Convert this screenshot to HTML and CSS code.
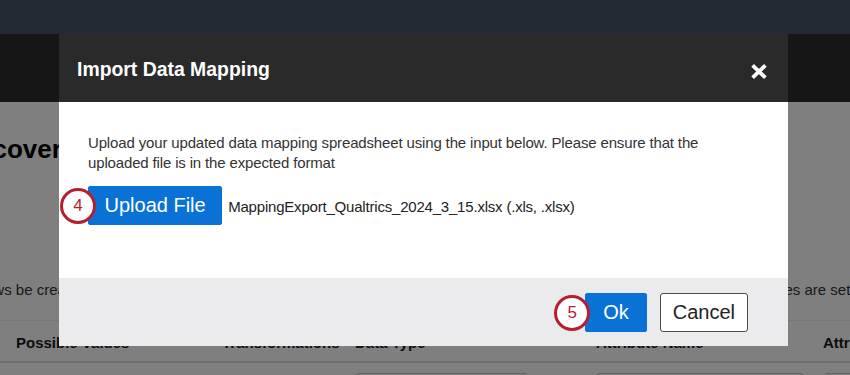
FILE: index.html
```html
<!DOCTYPE html>
<html lang="en">
<head>
<meta charset="utf-8">
<title>Import Data Mapping</title>
<link rel="stylesheet" href="styles.css">
</head>
<body>
<div class="page">
  <nav class="topnav"></nav>
  <header class="pagebar"></header>
  <main class="content">
    <h1 class="title">Discover Data Mapping</h1>
    <p class="note"><span class="note-left">rows be created for each new column found in the uploaded spreadsheet file</span><span class="note-right">values are set for each attribute</span></p>
    <div class="table">
      <div class="thead">
        <div>Possible Values</div>
        <div>Transformations</div>
        <div>Data Type</div>
        <div>Attribute Name</div>
        <div>Attribute Type</div>
      </div>
      <div class="trow">
        <div></div>
        <div></div>
        <div><span class="field f-type"></span></div>
        <div><span class="field f-name"></span></div>
        <div><span class="field f-attr"></span></div>
      </div>
    </div>
  </main>
</div>

<div class="overlay"></div>

<section class="modal" role="dialog" aria-label="Import Data Mapping">
  <header class="modal-head">
    <h2 class="modal-title">Import Data Mapping</h2>
    <button class="close" aria-label="Close">
      <svg width="16" height="15" viewBox="0 0 16 15" aria-hidden="true"><path d="M1.6 1.4 L14.4 13.6 M14.4 1.4 L1.6 13.6" stroke="#ffffff" stroke-width="3.8" stroke-linecap="butt" fill="none"/></svg>
    </button>
  </header>
  <div class="modal-body">
    <p class="intro">Upload your updated data mapping spreadsheet using the input below. Please ensure that the uploaded file is in the expected format</p>
    <div class="upload-row">
      <span class="btn-wrap"><span class="step step-4">4</span><button class="btn primary upload">Upload File</button></span>
      <span class="filename">MappingExport_Qualtrics_2024_3_15.xlsx (.xls, .xlsx)</span>
    </div>
  </div>
  <footer class="modal-foot">
    <span class="btn-wrap"><span class="step step-5">5</span><button class="btn primary ok">Ok</button></span>
    <button class="btn secondary">Cancel</button>
  </footer>
</section>
</body>
</html>
```
FILE: styles.css
```css
html, body {
  margin: 0;
  padding: 0;
}
body {
  width: 850px;
  height: 375px;
  overflow: hidden;
  background: #ffffff;
  font-family: "Liberation Sans", Arial, Helvetica, sans-serif;
  color: #333333;
}

/* ---------- page behind the dialog ---------- */
.page {
  display: flex;
  flex-direction: column;
}
.topnav {
  height: 34px;
  background: #465466;
}
.pagebar {
  height: 68px;
  background: #2c2c2c;
}
.content {
  display: flex;
  flex-direction: column;
  overflow: hidden;
}
.title {
  margin: 31px 0 0 -48px;
  font-size: 26px;
  line-height: 32px;
  font-weight: 700;
  color: #000000;
  white-space: nowrap;
}
.note {
  display: flex;
  margin: 115px 0 0;
  font-size: 15px;
  line-height: 20px;
  color: #333333;
  white-space: nowrap;
}
.note-left {
  flex: 0 0 777px;
  margin-left: -20px;
  overflow: hidden;
}
.table {
  margin-top: 20px;
}
.thead {
  display: grid;
  grid-template-columns: 206px 133px 241px 227px 1fr;
  padding: 12px 0 8px 16px;
  border-top: 1px solid #eeeeee;
  border-bottom: 2px solid #dddddd;
  font-size: 15px;
  line-height: 20px;
  font-weight: 700;
  color: #1a1a1a;
  white-space: nowrap;
}
.trow {
  display: grid;
  grid-template-columns: 206px 133px 241px 227px 1fr;
  padding: 10px 0 0 16px;
}
.field {
  display: block;
  height: 30px;
  border: 1px solid #c8c8c8;
  border-radius: 3px;
  background: #ffffff;
}
.f-type { width: 171px; }
.f-name { width: 206px; }
.f-attr { width: 60px; margin-left: 1px; }

/* ---------- overlay ---------- */
.overlay {
  position: fixed;
  inset: 0;
  background: rgba(0, 0, 0, 0.5);
}

/* ---------- dialog ---------- */
.modal {
  position: fixed;
  top: 34px;
  left: 59px;
  width: 729px;
  display: flex;
  flex-direction: column;
  background: #ffffff;
}
.modal-head {
  height: 68px;
  box-sizing: border-box;
  display: flex;
  align-items: center;
  justify-content: space-between;
  padding: 2px 21px 0 18px;
  background: #2a2a2a;
}
.modal-title {
  margin: 0;
  font-size: 19.4px;
  font-weight: 700;
  color: #ffffff;
}
.close {
  display: flex;
  padding: 0;
  margin: 4px 0 0;
  border: 0;
  background: transparent;
}
.modal-body {
  padding: 31px 29px 53px;
}
.intro {
  margin: 0;
  font-size: 15px;
  line-height: 20px;
  letter-spacing: -0.15px;
  color: #333333;
}
.upload-row {
  display: flex;
  align-items: baseline;
  gap: 6px;
  margin-top: 13px;
}
.filename {
  font-size: 15px;
  line-height: 20px;
  letter-spacing: -0.2px;
  color: #222222;
  white-space: nowrap;
}
.modal-foot {
  height: 68px;
  box-sizing: border-box;
  display: flex;
  align-items: center;
  justify-content: flex-end;
  gap: 13px;
  padding: 1px 40px 0 0;
  background: #ebebed;
}

/* ---------- buttons ---------- */
.btn-wrap {
  position: relative;
  display: inline-flex;
}
.btn {
  font-family: "Liberation Sans", Arial, Helvetica, sans-serif;
  font-size: 20px;
  line-height: 23px;
  padding: 7px 16px;
  border: 1px solid transparent;
  border-radius: 2px;
  cursor: pointer;
}
.primary {
  background: #0a72d6;
  border-color: #0a72d6;
  color: #ffffff;
}
.upload {
  padding-left: 15.5px;
  padding-right: 15.5px;
}
.ok {
  padding-left: 17px;
  padding-right: 17px;
}
.secondary {
  background: #ffffff;
  border-color: #4a4a4a;
  border-radius: 3px;
  color: #222222;
  padding-left: 12px;
  padding-right: 12px;
}

/* ---------- step badges ---------- */
.step {
  position: absolute;
  top: 50%;
  z-index: 1;
  width: 36px;
  height: 36px;
  box-sizing: border-box;
  display: flex;
  align-items: center;
  justify-content: center;
  border: 3px solid #b71f2e;
  border-radius: 50%;
  background: #ffffff;
  color: #b71f2e;
  font-size: 17px;
  transform: translateY(-50%);
}
.step-4 { left: -28px; }
.step-5 { left: -31px; }
```
